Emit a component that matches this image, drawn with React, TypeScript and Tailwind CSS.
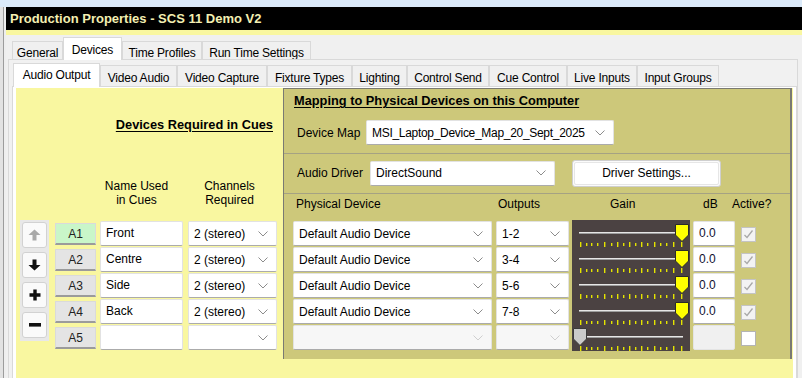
import clsx from "clsx"

// gain slider scale: tick x positions (relative to the dark panel) and which ones are long
const ticks = [8, 14, 19, 25, 32, 39, 45, 51, 57, 63, 69, 75, 82, 88, 94, 101, 109]
const longTicks = [0, 4, 6, 8, 10, 12, 15, 16]

const rows = [
  { id: "A1", name: "Front", ch: "2 (stereo)", dev: "Default Audio Device", out: "1-2", db: "0.0" },
  { id: "A2", name: "Centre", ch: "2 (stereo)", dev: "Default Audio Device", out: "3-4", db: "0.0" },
  { id: "A3", name: "Side", ch: "2 (stereo)", dev: "Default Audio Device", out: "5-6", db: "0.0" },
  { id: "A4", name: "Back", ch: "2 (stereo)", dev: "Default Audio Device", out: "7-8", db: "0.0" },
  { id: "A5", name: "", ch: "", dev: "", out: "", db: "" },
]

const mainTabs = [
  { label: "General", w: "w-[51px]" },
  { label: "Devices", w: "w-[59px]", active: true },
  { label: "Time Profiles", w: "w-[80px]" },
  { label: "Run Time Settings", w: "w-[109px]" },
]

const subTabs = [
  { label: "Audio Output", w: "w-[87px]", active: true },
  { label: "Video Audio", w: "w-[77px]" },
  { label: "Video Capture", w: "w-[90px]" },
  { label: "Fixture Types", w: "w-[85px]" },
  { label: "Lighting", w: "w-[55px]" },
  { label: "Control Send", w: "w-[82px]" },
  { label: "Cue Control", w: "w-[78px]" },
  { label: "Live Inputs", w: "w-[70px]" },
  { label: "Input Groups", w: "w-[82px]" },
]

function Chevron({ disabled }: { disabled?: boolean }) {
  return (
    <svg width="10" height="6" viewBox="0 0 10 6" className="shrink-0">
      <polyline points="0.5,0.5 5,5 9.5,0.5" fill="none" stroke={disabled ? "#cfcfcf" : "#8c8c8c"} strokeWidth="1" />
    </svg>
  )
}

function Combo({ text, className, disabled }: { text: string; className: string; disabled?: boolean }) {
  return (
    <div
      className={clsx(
        "h-[25px] flex items-center justify-between rounded-[2px] border border-[#e2e2e2] border-b-[#ababab] pl-[5px] pr-[8px]",
        disabled ? "bg-[#f7f7f7]" : "bg-white",
        className
      )}
    >
      <span className="whitespace-nowrap">{text}</span>
      <Chevron disabled={disabled} />
    </div>
  )
}

function TextBox({ text, className, disabled }: { text: string; className: string; disabled?: boolean }) {
  return (
    <div
      className={clsx(
        "h-[25px] rounded-[2px] border pl-[5px] pt-[4px] leading-[14px] whitespace-nowrap",
        disabled ? "bg-[#f0f0f0] border-[#e4e4e4]" : "bg-white border-[#e2e2e2] border-b-[#ababab]",
        className
      )}
    >
      {text}
    </div>
  )
}

function GainRow({ active }: { active: boolean }) {
  return (
    <svg width="118" height="26" viewBox="0 0 118 26" className="block">
      <line x1={active ? 7 : 14} y1="11.5" x2="111" y2="11.5" stroke="#e6e6e6" strokeWidth="1" />
      <line x1={active ? 7 : 14} y1="12.5" x2="111" y2="12.5" stroke="#9d9d9d" strokeWidth="1" />
      {ticks.map((x, i) => (
        <rect
          key={x}
          x={x}
          y={longTicks.includes(i) ? 21 : 22}
          width="1.4"
          height={longTicks.includes(i) ? 5 : 3}
          fill="#e4e400"
        />
      ))}
      {active ? (
        <polygon points="103.5,3.5 116.5,3.5 116.5,14 110,20.5 103.5,14" fill="#ffff00" stroke="#2a2a2a" strokeWidth="1" />
      ) : (
        <polygon points="1.5,3.5 14.5,3.5 14.5,14 8,20.5 1.5,14" fill="#cacaca" stroke="#3a3a3a" strokeWidth="1" />
      )}
    </svg>
  )
}

function Check({ checked }: { checked: boolean }) {
  return (
    <div
      className={clsx(
        "w-[15px] h-[15px] border flex items-center justify-center",
        checked ? "bg-[#f3f3f3] border-[#c4c4c4]" : "bg-white border-[#b4b4b4]"
      )}
    >
      {checked && (
        <svg width="11" height="11" viewBox="0 0 11 11">
          <polyline points="1.5,6 4,8.5 9.5,1.5" fill="none" stroke="#a8a8a8" strokeWidth="1.3" />
        </svg>
      )}
    </div>
  )
}

function MoveButton({ children }: { children: React.ReactNode }) {
  return (
    <div className="w-[25px] h-[26px] rounded-[3px] bg-[#fafafa] border border-[#d2d2d2] flex items-center justify-center">
      {children}
    </div>
  )
}

export default function App() {
  return (
    <div className="w-[802px] h-[378px] overflow-hidden bg-[#dbeaf9] pt-[7px] flex flex-col font-['Liberation_Sans',Arial,sans-serif] text-[12px] text-black">
      <div className="flex-1 flex min-h-0">
        {/* window frame */}
        <div className="w-[3px] bg-[#e2e2e2]" />
        <div className="w-[1px] bg-[#9c9c9c]" />
        <div className="w-[2px] bg-[#eeeeee]" />

        <div className="flex-1 flex flex-col bg-[#f0f0f0] min-w-0">
          {/* title bar */}
          <div className="h-[23px] bg-black pl-[4px] flex items-center text-[#f3efb2] font-bold text-[13px]">
            Production Properties - SCS 11 Demo V2
          </div>
          <div className="h-[5px] bg-[#f9f7a0]" />

          {/* main tabs */}
          <div className="h-[24px] pl-[6px] flex items-end tracking-[-0.2px]">
            {mainTabs.map((t) => (
              <div
                key={t.label}
                className={clsx(
                  "flex justify-center border border-b-0 border-[#d9d9d9] whitespace-nowrap",
                  t.w,
                  t.active ? "h-[23px] bg-white pt-[3px] -mb-[1px] relative" : "h-[18px] bg-[#f0f0f0] pt-[2px]"
                )}
              >
                {t.label}
              </div>
            ))}
          </div>

          {/* main tab page */}
          <div className="flex-1 ml-[2px] mr-[4px] border border-b-0 border-[#d9d9d9] bg-[#f1f1f1] flex flex-col min-h-0">
            {/* sub tabs */}
            <div className="h-[26px] pl-[4px] pt-[2px] flex items-end tracking-[-0.2px]">
              {subTabs.map((t) => (
                <div
                  key={t.label}
                  className={clsx(
                    "flex justify-center border border-b-0 border-[#d9d9d9] whitespace-nowrap",
                    t.w,
                    t.active ? "h-[24px] bg-white pt-[2px] -mb-[1px] relative" : "h-[21px] bg-[#f0f0f0] pt-[3px]"
                  )}
                >
                  {t.label}
                </div>
              ))}
            </div>

            {/* sub tab page */}
            <div className="flex-1 ml-[3px] border border-b-0 border-[#d9d9d9] bg-white pt-[1px] px-[3px] flex flex-col min-h-0">
              <div className="flex-1 bg-[#f9f7a0] flex">
                {/* devices required in cues */}
                <div className="w-[267px] flex flex-col">
                  <div className="mt-[30px] h-[14px] leading-[14px] text-right pr-[10px] font-bold text-[12.8px] underline underline-offset-2">
                    Devices Required in Cues
                  </div>
                  <div className="mt-[47px] ml-[80px] flex gap-[12px] leading-[14px]">
                    <div className="w-[81px] text-center">
                      Name Used
                      <br />
                      in Cues
                    </div>
                    <div className="w-[81px] text-center">
                      Channels
                      <br />
                      Required
                    </div>
                  </div>
                  <div className="mt-[13px] pl-[4px] flex">
                    <div className="w-[29px] h-[121px] bg-[#e8e8e8] p-[2px] flex flex-col gap-[4px]">
                      <MoveButton>
                        <svg width="13" height="12" viewBox="0 0 13 12">
                          <path d="M6.5 0.5 L12.5 6 H8.5 V11.5 H4.5 V6 H0.5 Z" fill="#a9a9a9" />
                        </svg>
                      </MoveButton>
                      <MoveButton>
                        <svg width="13" height="12" viewBox="0 0 13 12">
                          <path d="M6.5 11.5 L12.5 6 H8.5 V0.5 H4.5 V6 H0.5 Z" fill="#111" />
                        </svg>
                      </MoveButton>
                      <MoveButton>
                        <svg width="12" height="12" viewBox="0 0 12 12">
                          <path d="M4.3 0.5 H7.7 V4.3 H11.5 V7.7 H7.7 V11.5 H4.3 V7.7 H0.5 V4.3 H4.3 Z" fill="#111" />
                        </svg>
                      </MoveButton>
                      <MoveButton>
                        <svg width="12" height="4" viewBox="0 0 12 4">
                          <rect x="0" y="0" width="12" height="3.6" fill="#111" />
                        </svg>
                      </MoveButton>
                    </div>
                    <div className="ml-[6px] pt-[1px] flex flex-col gap-[1px]">
                      {rows.map((r) => (
                        <div key={r.id} className="h-[25px] flex">
                          <div className="w-[41px] h-[25px] pt-[2px]">
                            <div
                              className={clsx(
                                "h-[22px] border border-[#dadada] border-b-2 border-b-[#9b9b9b] flex items-center justify-center text-[#222]",
                                r.id === "A1" ? "bg-[#c9f6c9]" : "bg-[#e4e4e4]"
                              )}
                            >
                              {r.id}
                            </div>
                          </div>
                          <TextBox text={r.name} className="ml-[4px] w-[83px]" />
                          <Combo text={r.ch} className="ml-[5px] w-[89px]" />
                        </div>
                      ))}
                    </div>
                  </div>
                </div>

                {/* mapping to physical devices */}
                <div className="w-[509px] h-[271px] bg-[#cdc87a] border-l border-t border-r-2 border-[#7a7a72] flex flex-col">
                  <div className="pl-[10px] pt-[5px] pb-[8px] border-b border-[#a5a283]">
                    <div className="h-[14px] leading-[14px] font-bold text-[12.8px] underline underline-offset-2">
                      Mapping to Physical Devices on this Computer
                    </div>
                    <div className="mt-[12px] pl-[3px] flex items-center">
                      <div className="w-[69px]">Device Map</div>
                      <Combo text="MSI_Laptop_Device_Map_20_Sept_2025" className="w-[248px] h-[24px] tracking-[-0.3px]" />
                    </div>
                  </div>
                  <div className="pl-[13px] pt-[6px] pb-[7px] border-b border-[#a5a283] flex items-center h-[40px]">
                    <div className="w-[73px]">Audio Driver</div>
                    <Combo text="DirectSound" className="w-[185px]" />
                    <div className="ml-[17px] w-[149px] h-[27px] rounded-[3px] border border-[#cfcfcf] bg-[#fbfbfb] p-[1px]">
                      <div className="h-full rounded-[2px] border border-[#e6e6e6] bg-white flex items-center justify-center">
                        Driver Settings...
                      </div>
                    </div>
                  </div>
                  <div className="pt-[3px] flex flex-col">
                    <div className="h-[14px] leading-[14px] pl-[12px] flex">
                      <div className="w-[202px]">Physical Device</div>
                      <div className="w-[112px]">Outputs</div>
                      <div className="w-[93px]">Gain</div>
                      <div className="w-[29px]">dB</div>
                      <div>Active?</div>
                    </div>
                    <div className="mt-[9px] pl-[9px] flex">
                      <div className="w-[199px] pt-[1px] flex flex-col gap-[1px]">
                        {rows.map((r) => (
                          <Combo key={r.id} text={r.dev} disabled={!r.dev} className="w-[199px]" />
                        ))}
                      </div>
                      <div className="ml-[4px] w-[73px] pt-[1px] flex flex-col gap-[1px]">
                        {rows.map((r) => (
                          <Combo key={r.id} text={r.out} disabled={!r.out} className="w-[73px]" />
                        ))}
                      </div>
                      <div className="ml-[3px] w-[118px] h-[131px] bg-[#4b4242] pt-[1px] flex flex-col">
                        {rows.map((r) => (
                          <GainRow key={r.id} active={!!r.dev} />
                        ))}
                      </div>
                      <div className="ml-[3px] w-[42px] pt-[1px] flex flex-col gap-[1px]">
                        {rows.map((r) => (
                          <TextBox key={r.id} text={r.db} disabled={!r.db} className="w-[42px] text-[#101030]" />
                        ))}
                      </div>
                      <div className="ml-[6px] pt-[7px] flex flex-col gap-[11px]">
                        {rows.map((r) => (
                          <Check key={r.id} checked={!!r.dev} />
                        ))}
                      </div>
                    </div>
                  </div>
                </div>
              </div>
            </div>
          </div>
        </div>
      </div>
    </div>
  )
}
